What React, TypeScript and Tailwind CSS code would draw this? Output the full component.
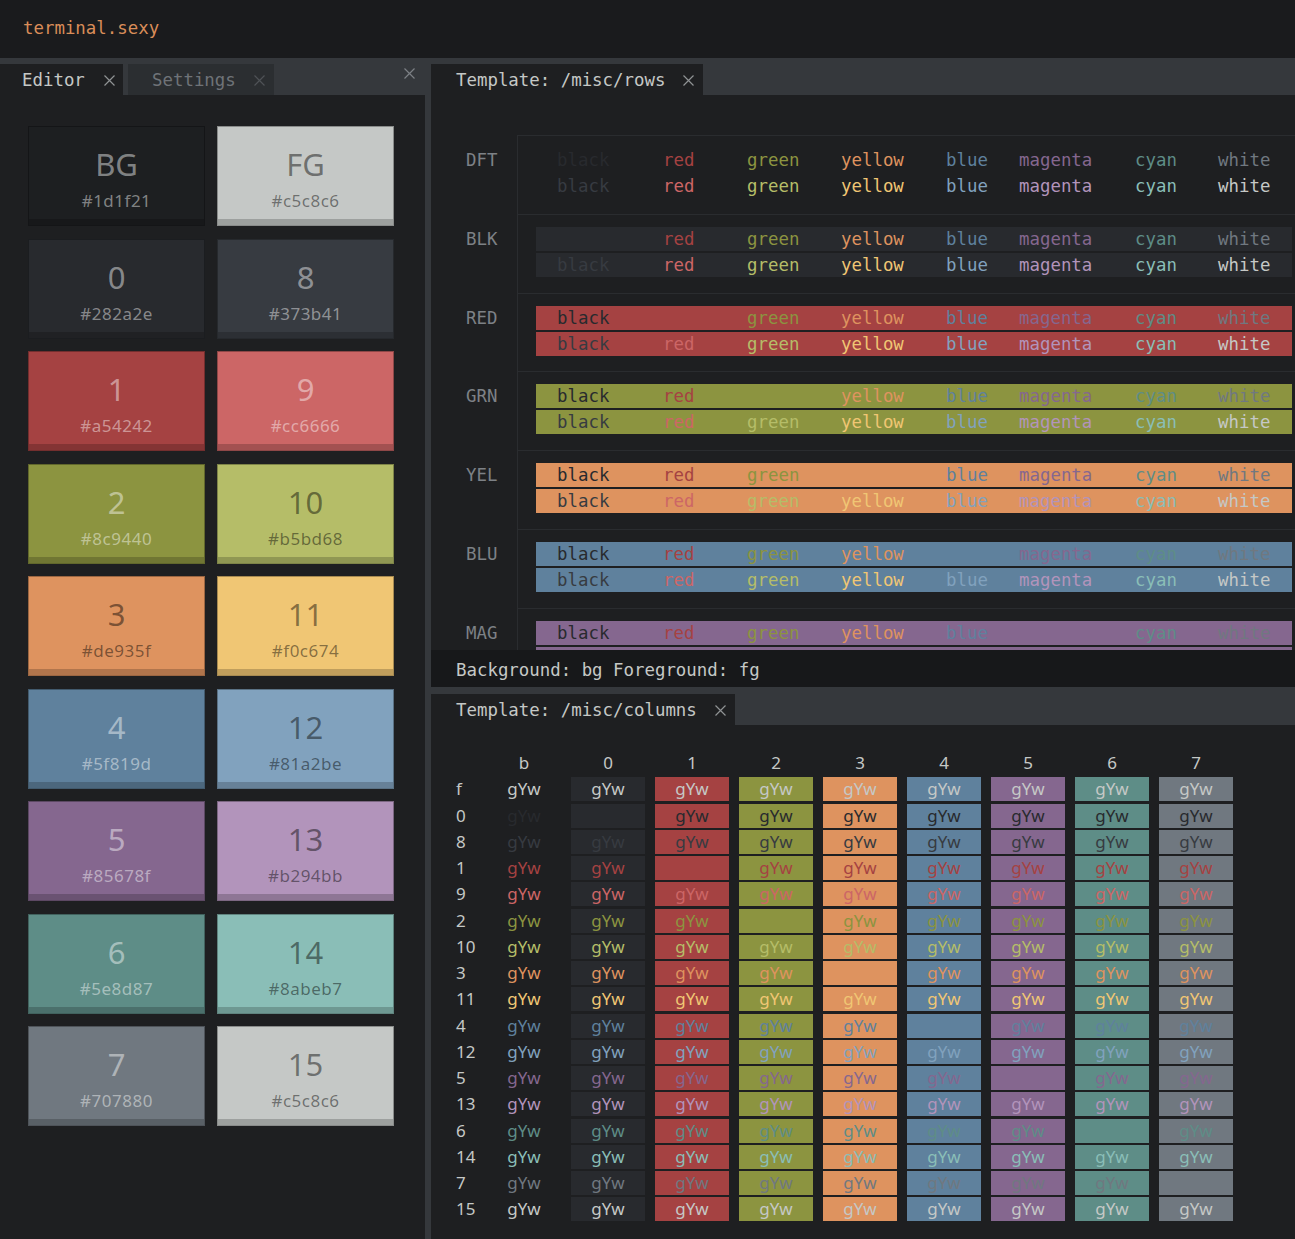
import React from 'react';

const NORMAL = ['#282a2e', '#a54242', '#8c9440', '#de935f', '#5f819d', '#85678f', '#5e8d87', '#707880'];
const BRIGHT = ['#373b41', '#cc6666', '#b5bd68', '#f0c674', '#81a2be', '#b294bb', '#8abeb7', '#c5c8c6'];
const WORDS = ['black', 'red', 'green', 'yellow', 'blue', 'magenta', 'cyan', 'white'];

// full class names so tailwind can see them
const TEXT: Record<string, string> = {
  '#282a2e': 'text-[#282a2e]',
  '#a54242': 'text-[#a54242]',
  '#8c9440': 'text-[#8c9440]',
  '#de935f': 'text-[#de935f]',
  '#5f819d': 'text-[#5f819d]',
  '#85678f': 'text-[#85678f]',
  '#5e8d87': 'text-[#5e8d87]',
  '#707880': 'text-[#707880]',
  '#373b41': 'text-[#373b41]',
  '#cc6666': 'text-[#cc6666]',
  '#b5bd68': 'text-[#b5bd68]',
  '#f0c674': 'text-[#f0c674]',
  '#81a2be': 'text-[#81a2be]',
  '#b294bb': 'text-[#b294bb]',
  '#8abeb7': 'text-[#8abeb7]',
  '#c5c8c6': 'text-[#c5c8c6]',
};

const BG: Record<string, string> = {
  '#1d1f21': 'bg-[#1d1f21]',
  '#c5c8c6': 'bg-[#c5c8c6]',
  '#282a2e': 'bg-[#282a2e]',
  '#373b41': 'bg-[#373b41]',
  '#a54242': 'bg-[#a54242]',
  '#cc6666': 'bg-[#cc6666]',
  '#8c9440': 'bg-[#8c9440]',
  '#b5bd68': 'bg-[#b5bd68]',
  '#de935f': 'bg-[#de935f]',
  '#f0c674': 'bg-[#f0c674]',
  '#5f819d': 'bg-[#5f819d]',
  '#81a2be': 'bg-[#81a2be]',
  '#85678f': 'bg-[#85678f]',
  '#b294bb': 'bg-[#b294bb]',
  '#5e8d87': 'bg-[#5e8d87]',
  '#8abeb7': 'bg-[#8abeb7]',
  '#707880': 'bg-[#707880]',
};

const SWATCHES: { label: string; hex: string; light: boolean }[] = [
  { label: 'BG', hex: '#1d1f21', light: false },
  { label: 'FG', hex: '#c5c8c6', light: true },
  { label: '0', hex: '#282a2e', light: false },
  { label: '8', hex: '#373b41', light: false },
  { label: '1', hex: '#a54242', light: false },
  { label: '9', hex: '#cc6666', light: false },
  { label: '2', hex: '#8c9440', light: false },
  { label: '10', hex: '#b5bd68', light: true },
  { label: '3', hex: '#de935f', light: true },
  { label: '11', hex: '#f0c674', light: true },
  { label: '4', hex: '#5f819d', light: false },
  { label: '12', hex: '#81a2be', light: true },
  { label: '5', hex: '#85678f', light: false },
  { label: '13', hex: '#b294bb', light: true },
  { label: '6', hex: '#5e8d87', light: false },
  { label: '14', hex: '#8abeb7', light: true },
  { label: '7', hex: '#707880', light: false },
  { label: '15', hex: '#c5c8c6', light: true },
];

const GROUPS: { label: string; bg: string | null }[] = [
  { label: 'DFT', bg: null },
  { label: 'BLK', bg: NORMAL[0] },
  { label: 'RED', bg: NORMAL[1] },
  { label: 'GRN', bg: NORMAL[2] },
  { label: 'YEL', bg: NORMAL[3] },
  { label: 'BLU', bg: NORMAL[4] },
  { label: 'MAG', bg: NORMAL[5] },
  { label: 'CYN', bg: NORMAL[6] },
  { label: 'WHT', bg: NORMAL[7] },
];

const COL_ROWS: { label: string; fg: string }[] = [
  { label: 'f', fg: '#c5c8c6' },
  { label: '0', fg: NORMAL[0] },
  { label: '8', fg: BRIGHT[0] },
  { label: '1', fg: NORMAL[1] },
  { label: '9', fg: BRIGHT[1] },
  { label: '2', fg: NORMAL[2] },
  { label: '10', fg: BRIGHT[2] },
  { label: '3', fg: NORMAL[3] },
  { label: '11', fg: BRIGHT[3] },
  { label: '4', fg: NORMAL[4] },
  { label: '12', fg: BRIGHT[4] },
  { label: '5', fg: NORMAL[5] },
  { label: '13', fg: BRIGHT[5] },
  { label: '6', fg: NORMAL[6] },
  { label: '14', fg: BRIGHT[6] },
  { label: '7', fg: NORMAL[7] },
  { label: '15', fg: BRIGHT[7] },
];

const mono = "font-['DejaVu_Sans_Mono',monospace]";
const sans = "font-['Noto_Sans','Open_Sans',sans-serif]";

const Close = ({ className }: { className?: string }) => (
  <svg width="11" height="11" viewBox="0 0 11 11" className={className} fill="none" stroke="currentColor" strokeWidth="1.2">
    <path d="M0.5 0.5L10.5 10.5M10.5 0.5L0.5 10.5" />
  </svg>
);

const Swatch = ({ label, hex, light }: { label: string; hex: string; light: boolean }) => (
  <div className={`w-[177px] h-[100px] flex flex-col border border-black/30 ${BG[hex]}`}>
    <div className={`flex-1 flex flex-col items-center pt-[18px] ${sans} ${light ? 'text-black/45' : 'text-white/45'}`}>
      <span className="text-[31px] leading-[38px]">{label}</span>
      <span className="text-[17px] leading-[22px] mt-[7px] tracking-[0.5px]">{hex}</span>
    </div>
    <div className="h-[6px] bg-black/20" />
  </div>
);

const RowsLine = ({ bg, colors }: { bg: string | null; colors: string[] }) => (
  <div className={`h-[24px] grid grid-cols-[106px_84px_94px_105px_73px_116px_83px_1fr] pl-[21px] items-center leading-[24px] ${bg ? BG[bg] : ''}`}>
    {WORDS.map((w, i) => (
      <span key={w} className={TEXT[colors[i]]}>
        {w}
      </span>
    ))}
  </div>
);

export default function App() {
  return (
    <div className={`w-[1295px] h-[1239px] flex flex-col bg-[#1a1b1d] overflow-hidden ${mono} text-[17.4px]`}>
      {/* header */}
      <div className="h-[58px] shrink-0 flex items-center pl-[23px] pb-[2px]">
        <span className="text-[#d98d59]">terminal.sexy</span>
      </div>

      <div className="flex-1 flex gap-[6px] bg-[#35383c] min-h-0">
        {/* left pane */}
        <div className="w-[425px] flex flex-col">
          <div className="h-[37px] shrink-0 pt-[6px] flex items-stretch">
            <div className="w-[123px] bg-[#1e1f21] flex items-center pl-[22px] pt-[2px] text-[#c5c8c6]">
              <span>Editor</span>
              <Close className="ml-[19px] text-[#8f9294]" />
            </div>
            <div className="w-[146px] ml-[5px] bg-[#2b2e31] flex items-center pl-[24px] pt-[2px] text-[#6f7378]">
              <span>Settings</span>
              <Close className="ml-[18px] text-[#4e5256]" />
            </div>
            <div className="flex-1 flex justify-end items-start pt-[4px] pr-[10px] text-[#7c8085]">
              <Close />
            </div>
          </div>
          <div className="flex-1 bg-[#1e1f21] pt-[31px] pl-[28px]">
            <div className="grid grid-cols-[177px_177px] gap-x-[12px] gap-y-[12.5px]">
              {SWATCHES.map((s) => (
                <Swatch key={s.label + s.hex} {...s} />
              ))}
            </div>
          </div>
        </div>

        {/* right pane */}
        <div className="flex-1 flex flex-col min-w-0">
          <div className="h-[37px] shrink-0 pt-[6px] flex items-stretch">
            <div className="w-[272px] bg-[#1e1f21] flex items-center pl-[25px] pt-[2px] text-[#c5c8c6]">
              <span>Template: /misc/rows</span>
              <Close className="ml-[18px] text-[#8f9294]" />
            </div>
          </div>

          {/* rows template */}
          <div className="h-[555px] shrink-0 bg-[#1e1f21] overflow-hidden pt-[40px]">
            {GROUPS.map((g) => (
              <div key={g.label} className="flex">
                <div className="w-[86px] shrink-0 pl-[35px] pt-[13px] leading-[24px] text-[#7d8186]">{g.label}</div>
                <div className="flex-1 border-t border-l border-[#2a2c2f] pl-[18px] pr-[3px] pt-[12px] pb-[15.8px] flex flex-col gap-[2px]">
                  <RowsLine bg={g.bg} colors={NORMAL} />
                  <RowsLine bg={g.bg} colors={BRIGHT} />
                </div>
              </div>
            ))}
          </div>

          {/* status */}
          <div className="h-[37px] shrink-0 bg-[#17181a] flex items-center pl-[25px] pt-[3px] text-[#c5c8c6]">
            Background: bg Foreground: fg
          </div>

          <div className="h-[38px] shrink-0 pt-[7px] flex items-stretch">
            <div className="w-[304px] bg-[#1e1f21] flex items-center pl-[25px] pt-[2px] text-[#c5c8c6]">
              <span>Template: /misc/columns</span>
              <Close className="ml-[18px] text-[#8f9294]" />
            </div>
          </div>

          {/* columns template */}
          <div className={`flex-1 bg-[#1e1f21] pt-[26px] pl-[25px] ${sans} text-[17px]`}>
            <div className="grid grid-cols-[21px_repeat(9,74px)] gap-x-[10px] gap-y-[2.25px] auto-rows-[24px] leading-[24px] text-[#c5c8c6]">
              <span />
              {['b', '0', '1', '2', '3', '4', '5', '6', '7'].map((h) => (
                <span key={h} className="text-center">
                  {h}
                </span>
              ))}
              {COL_ROWS.map((r) => (
                <React.Fragment key={r.label}>
                  <span>{r.label}</span>
                  <span className={`text-center ${TEXT[r.fg]}`}>gYw</span>
                  {NORMAL.map((bg) => (
                    <span key={bg} className={`text-center ${BG[bg]} ${TEXT[r.fg]}`}>
                      gYw
                    </span>
                  ))}
                </React.Fragment>
              ))}
            </div>
          </div>
        </div>
      </div>
    </div>
  );
}
